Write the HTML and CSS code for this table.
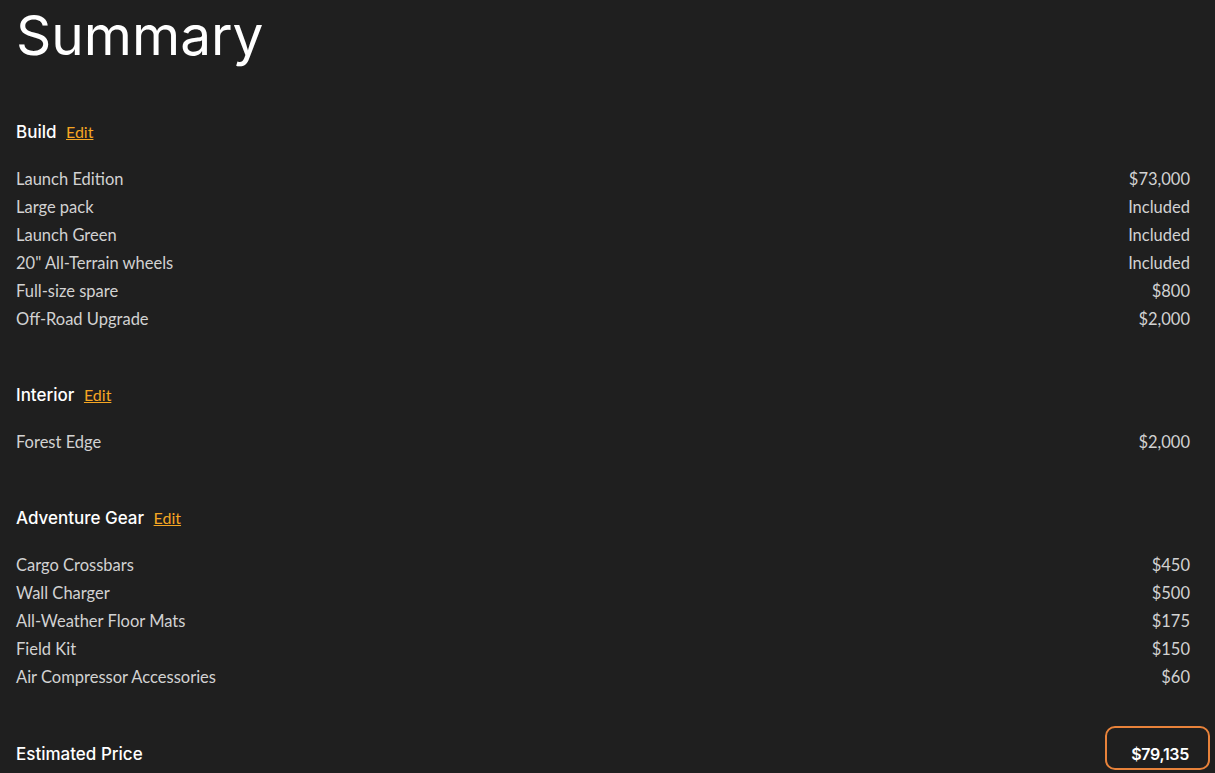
FILE: index.html
```html
<!DOCTYPE html>
<html lang="en">
<head>
  <meta charset="UTF-8" />
  <title>Summary</title>
  <link rel="stylesheet" href="styles.css">
</head>
<body>
  <div class="summary">
    <h1>Summary</h1>

    <!-- Build -->
    <div class="section">
      <h2>Build <a href="#" class="edit">Edit</a></h2>
      <ul class="items">
        <li><span>Launch Edition</span><span>$73,000</span></li>
        <li><span>Large pack</span><span>Included</span></li>
        <li><span>Launch Green</span><span>Included</span></li>
        <li><span>20" All-Terrain wheels</span><span>Included</span></li>
        <li><span>Full-size spare</span><span>$800</span></li>
        <li><span>Off-Road Upgrade</span><span>$2,000</span></li>
      </ul>
    </div>

    <!-- Interior -->
    <div class="section">
      <h2>Interior <a href="#" class="edit">Edit</a></h2>
      <ul class="items">
        <li><span>Forest Edge</span><span>$2,000</span></li>
      </ul>
    </div>

    <!-- Adventure Gear -->
    <div class="section gear">
      <h2>Adventure Gear <a href="#" class="edit">Edit</a></h2>
      <ul class="items">
        <li><span>Cargo Crossbars</span><span>$450</span></li>
        <li><span>Wall Charger</span><span>$500</span></li>
        <li><span>All-Weather Floor Mats</span><span>$175</span></li>
        <li><span>Field Kit</span><span>$150</span></li>
        <li><span>Air Compressor Accessories</span><span>$60</span></li>
      </ul>
    </div>

    <div class="total">
      <span class="total-label">Estimated Price</span>
      <span class="total-price">$79,135</span>
    </div>
  </div>
</body>
</html>
```

FILE: styles.css
```css
* {
  margin: 0;
  padding: 0;
  box-sizing: border-box;
}

body {
  font-family: 'Lato', sans-serif;
  background-color: #1f1f1f;
  color: #d2d2d2;
  overflow: hidden;
}

.summary {
  padding: 0 25px 0 16px;
}

h1 {
  font-family: 'Inter', sans-serif;
  font-size: 55px;
  font-weight: 400;
  color: #fff;
  line-height: 70px;
  margin-bottom: 48px;
}

.section {
  margin-bottom: 48px;
}

.gear {
  margin-top: 1px;
}

.section h2 {
  font-family: 'Inter', sans-serif;
  font-size: 17px;
  font-weight: 500;
  color: #fff;
  line-height: 28px;
  margin-bottom: 19px;
}

.edit {
  font-family: 'Lato', sans-serif;
  font-size: 16px;
  font-weight: 400;
  color: #f5a623;
  margin-left: 5px;
}

.items {
  list-style: none;
}

.items li {
  display: flex;
  justify-content: space-between;
  font-size: 16.5px;
  line-height: 28px;
}

.total {
  display: flex;
  justify-content: space-between;
  align-items: baseline;
  margin-top: -13px;
}

.total-label {
  font-family: 'Inter', sans-serif;
  font-size: 17px;
  font-weight: 500;
  color: #fff;
}

.total-price {
  font-family: 'Inter', sans-serif;
  font-size: 16px;
  font-weight: 600;
  letter-spacing: -0.3px;
  color: #fff;
  padding: 16px 19px 4px 24px;
  margin-right: -20px;
  border: 2px solid #e8823a;
  border-radius: 10px;
}
```
